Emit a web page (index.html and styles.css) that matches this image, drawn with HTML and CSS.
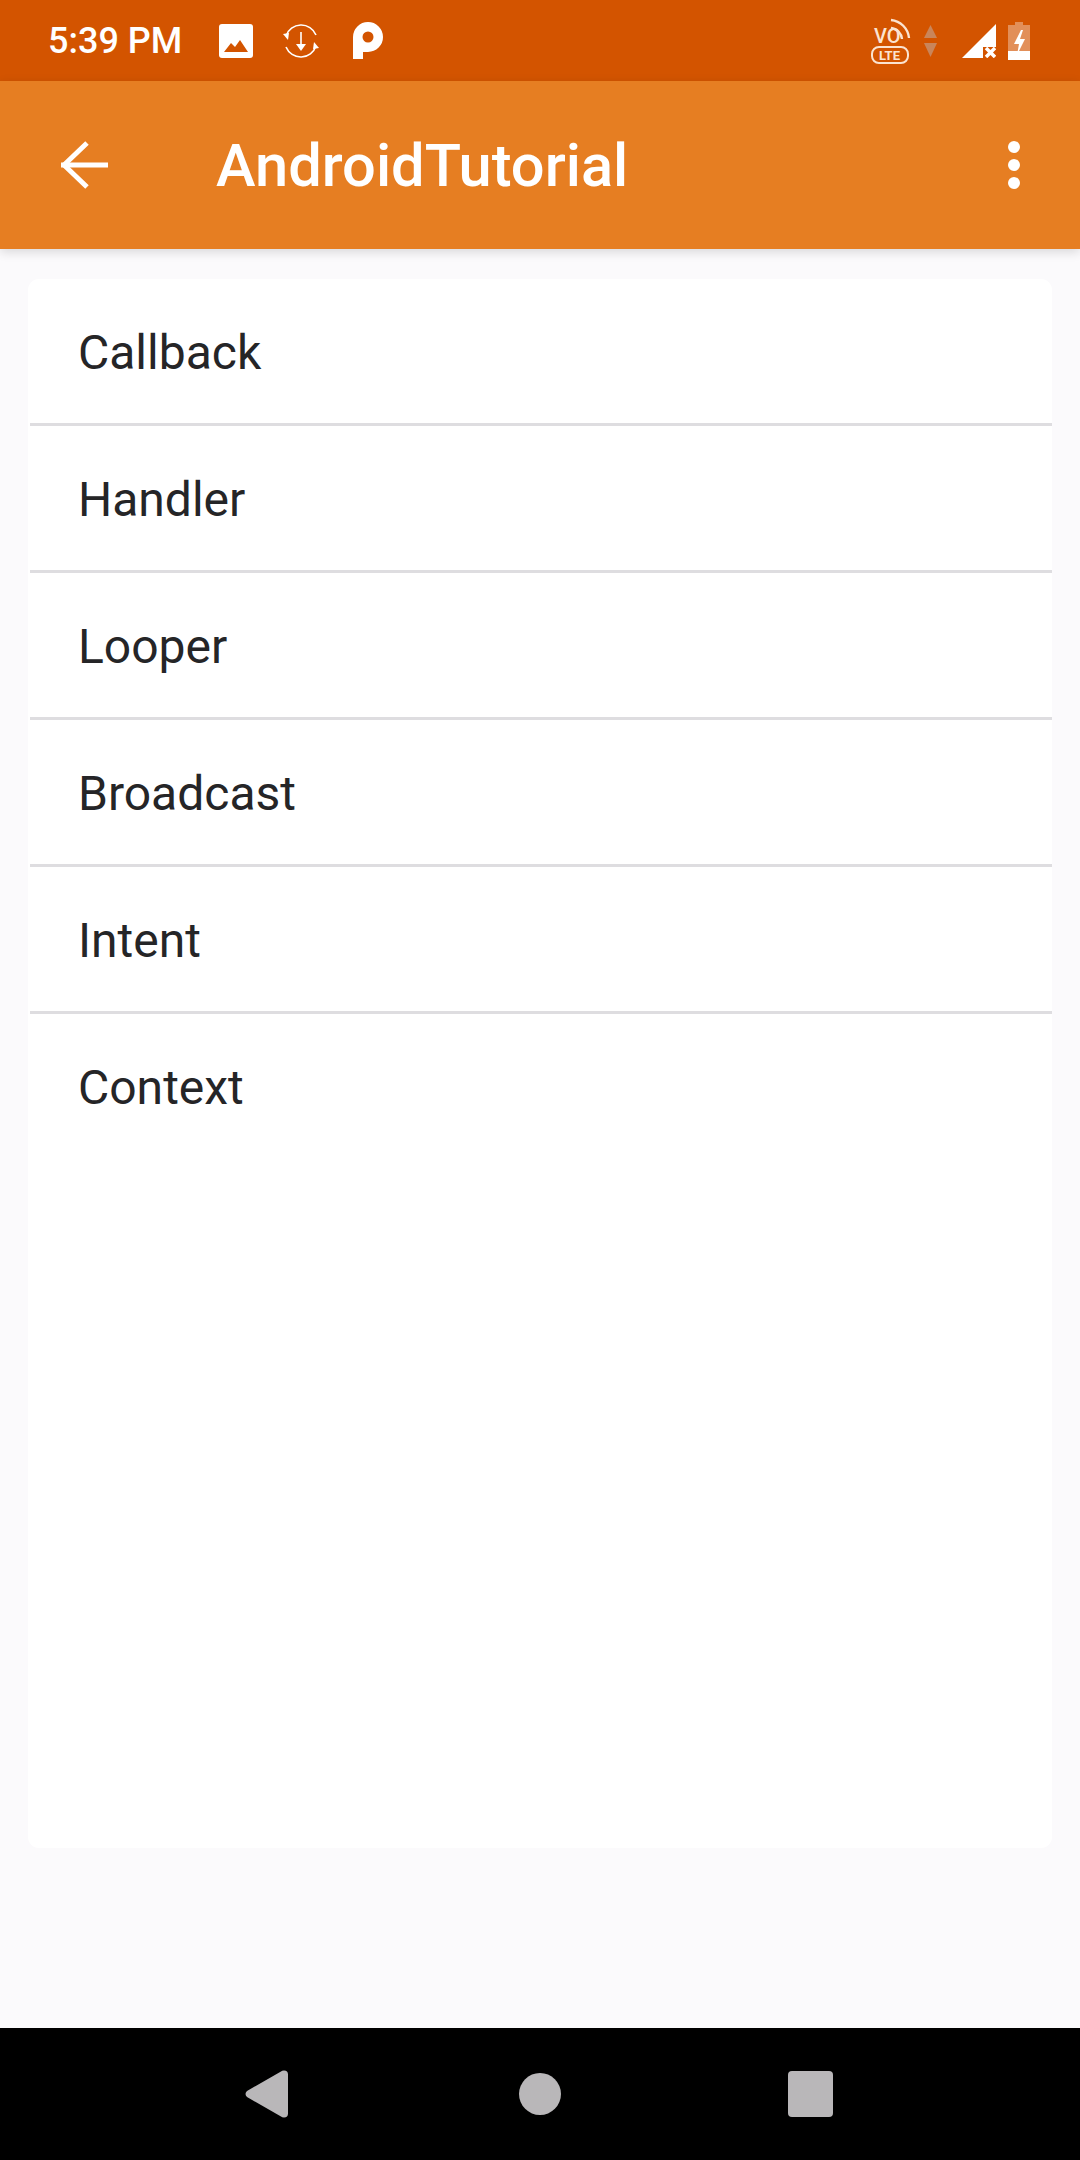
FILE: index.html
```html
<!DOCTYPE html>
<html lang="en">
<head>
  <meta charset="UTF-8" />
  <title>AndroidTutorial</title>
  <link rel="stylesheet" href="styles.css">
</head>
<body>
  <div class="status-bar">
    <span class="time">5:39 PM</span>
    <svg class="ic-photo" viewBox="0 0 34 34">
      <rect width="34" height="34" rx="3" fill="#fff"/>
      <path d="M5 28l7-9 4 4 5-7 8 12z" fill="#d35400"/>
    </svg>
    <svg class="ic-sync" viewBox="0 0 36 36" fill="none" stroke="#fff" stroke-width="1.6">
      <path d="M3 13A16 16 0 0 1 33 12"/>
      <path d="M33 23A16 16 0 0 1 3 24"/>
      <path d="M0 11l6-1-1 7z" fill="#fff" stroke="none"/>
      <path d="M36 25l-6 1 1-7z" fill="#fff" stroke="none"/>
      <path d="M18 9v17"/>
      <path d="M13 21h10l-5 7z" fill="#fff" stroke="none"/>
    </svg>
    <svg class="ic-p" viewBox="0 0 30 37">
      <path d="M0 37V15A15 15 0 1 1 15 30H10V37z" fill="#fff"/>
      <circle cx="15" cy="15" r="5.5" fill="#d35400"/>
    </svg>
    <div class="status-right">
      <svg class="ic-volte" viewBox="0 0 42 46" fill="none" stroke="#fbe3d0">
        <text x="4" y="25" class="vo-text">VO</text>
        <path d="M21 10a12 12 0 0 1 11 11M21 2a20 20 0 0 1 18 18" stroke-width="2.4"/>
        <rect x="2" y="29" width="36" height="16" rx="7" stroke-width="2"/>
        <text x="9" y="42" class="lte-text">LTE</text>
      </svg>
      <svg class="ic-updown" viewBox="0 0 13 32" fill="#c9855a">
        <path d="M6.500 0l6.500 13H0z"/>
        <path d="M6.500 32L0 18h13z"/>
      </svg>
      <svg class="ic-signal" viewBox="0 0 34 34">
        <path d="M34 0v23H21v11H0z" fill="#fff"/>
        <path d="M24 24l9 9M33 24l-9 9" stroke="#fff" stroke-width="3.500"/>
      </svg>
      <svg class="ic-battery" viewBox="0 0 22 38">
        <path d="M7 0h8v3h7v35H0V3h7z" fill="#fff" opacity="0.35"/>
        <path d="M0 29h22v9H0z" fill="#fff"/>
        <path d="M13 8l-7 14h5l-2 11 8-16h-5l3-9z" fill="#fff"/>
      </svg>
    </div>
  </div>

  <header class="app-bar">
    <svg class="ic-back" viewBox="0 0 48 48" fill="none" stroke="#fff" stroke-width="5">
      <path d="M0 24h47"/>
      <path d="M26 2L3 24l23 22"/>
    </svg>
    <h1 class="title">AndroidTutorial</h1>
    <div class="overflow">
      <span class="dot"></span>
      <span class="dot"></span>
      <span class="dot"></span>
    </div>
  </header>

  <main class="content">
    <ul class="card">
      <li class="row">Callback</li>
      <li class="row">Handler</li>
      <li class="row">Looper</li>
      <li class="row">Broadcast</li>
      <li class="row">Intent</li>
      <li class="row">Context</li>
    </ul>
  </main>

  <nav class="nav-bar">
    <svg class="ic-nav-back" viewBox="0 0 43 48">
      <path d="M39 0.500q4 0 4 4v39q0 4-4 4-2 0-3-1L2 27q-3-3 0-6L36 1.500q1-1 3-1z" fill="#b9b7b9"/>
    </svg>
    <span class="nav-home"></span>
    <span class="nav-recent"></span>
  </nav>
</body>
</html>
```

FILE: styles.css
```css
* {
  box-sizing: border-box;
}

html, body {
  margin: 0;
  padding: 0;
}

body {
  width: 1080px;
  height: 2160px;
  display: flex;
  flex-direction: column;
  font-family: Roboto, sans-serif;
  background-color: #fbfafc;
  overflow: hidden;
}

.status-bar {
  height: 81px;
  flex: none;
  display: flex;
  align-items: center;
  padding: 0 50px 0 48px;
  background-color: #d35400;
  color: #fff;
}

.time {
  font-size: 36px;
  font-weight: 500;
  width: 171px;
  flex: none;
}

.ic-photo {
  width: 34px;
  height: 34px;
}

.ic-sync {
  width: 36px;
  height: 36px;
  margin-left: 30px;
}

.ic-p {
  width: 30px;
  height: 37px;
  margin-left: 34px;
}

.status-right {
  margin-left: auto;
  display: flex;
  align-items: center;
}

.ic-volte {
  width: 42px;
  height: 46px;
}

.vo-text {
  font-family: Roboto, sans-serif;
  font-size: 20px;
  font-weight: 500;
  fill: #fbe3d0;
  stroke: none;
}

.lte-text {
  font-family: Roboto, sans-serif;
  font-size: 13px;
  font-weight: 700;
  fill: #fbe3d0;
  stroke: none;
}

.ic-updown {
  width: 13px;
  height: 32px;
  margin-left: 12px;
}

.ic-signal {
  width: 34px;
  height: 34px;
  margin-left: 25px;
}

.ic-battery {
  width: 22px;
  height: 38px;
  margin-left: 12px;
}

.app-bar {
  height: 168px;
  flex: none;
  display: flex;
  align-items: center;
  padding: 0 0 0 61px;
  background-color: #e67e22;
  box-shadow: 0 3px 10px rgba(0, 0, 0, 0.14);
  position: relative;
}

.ic-back {
  width: 48px;
  height: 48px;
  flex: none;
}

.title {
  margin: 2px 0 0 107px;
  font-size: 59.6px;
  font-weight: 500;
  color: #fff;
}

.overflow {
  margin-left: auto;
  margin-right: 60px;
  display: flex;
  flex-direction: column;
  gap: 6px;
}

.dot {
  width: 12px;
  height: 12px;
  border-radius: 50%;
  background-color: #fff;
}

.content {
  flex: 1;
  padding: 30px 28px 180px;
  min-height: 0;
}

.card {
  list-style: none;
  margin: 0;
  padding: 0;
  height: 100%;
  background-color: #fff;
  border-radius: 11px;
}

.row {
  height: 147px;
  padding: 0 0 0 50px;
  display: flex;
  align-items: center;
  font-size: 48px;
  color: #252527;
  position: relative;
}

.row:not(:last-child)::after {
  content: "";
  position: absolute;
  left: 2px;
  right: 0;
  bottom: 0;
  height: 3px;
  background-color: #dedde0;
}

.nav-bar {
  height: 132px;
  flex: none;
  display: flex;
  align-items: center;
  background-color: #000;
  padding: 0 0 0 245px;
}

.ic-nav-back {
  width: 43px;
  height: 48px;
}

.nav-home {
  width: 42px;
  height: 42px;
  margin-left: 231px;
  border-radius: 50%;
  background-color: #b9b7b9;
}

.nav-recent {
  width: 45px;
  height: 46px;
  margin-left: 227px;
  border-radius: 4px;
  background-color: #b9b7b9;
}
```
